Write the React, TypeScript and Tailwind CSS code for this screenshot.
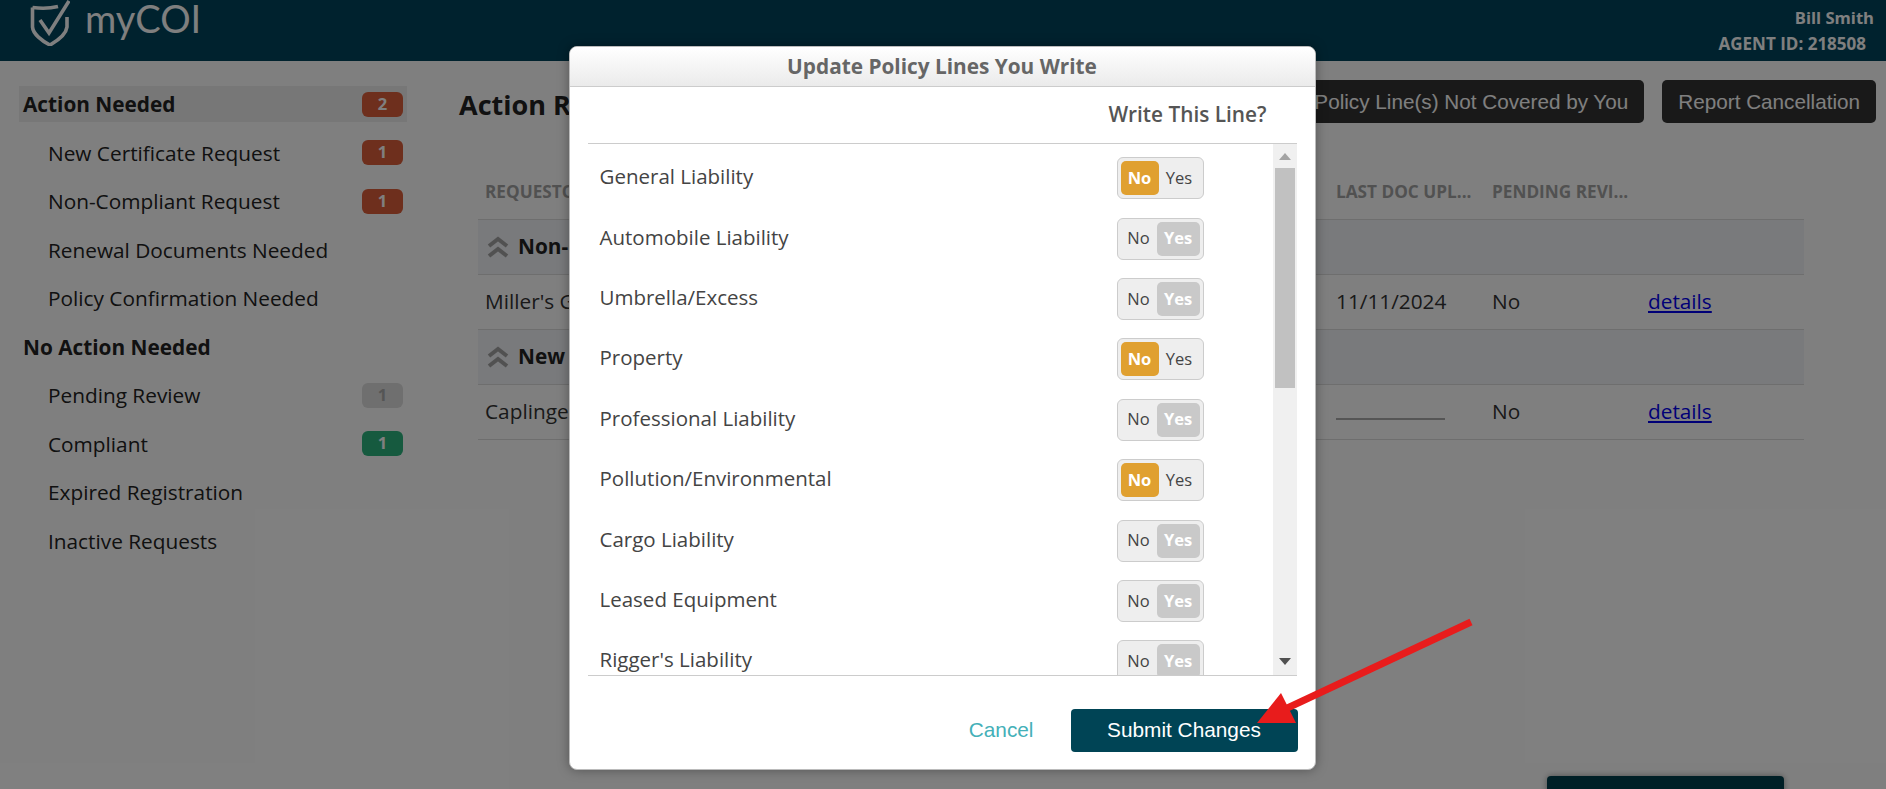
import { useState } from "react";

const sections = [
    {
        title: "Action Needed",
        active: true,
        count: 2,
        items: [
            { label: "New Certificate Request", count: 1, color: "red" },
            { label: "Non-Compliant Request", count: 1, color: "red" },
            { label: "Renewal Documents Needed" },
            { label: "Policy Confirmation Needed" },
        ],
    },
    {
        title: "No Action Needed",
        items: [
            { label: "Pending Review", count: 1, color: "gray" },
            { label: "Compliant", count: 1, color: "green" },
            { label: "Expired Registration" },
            { label: "Inactive Requests" },
        ],
    },
];

const initialLines = [
    { name: "General Liability", writes: false },
    { name: "Automobile Liability", writes: true },
    { name: "Umbrella/Excess", writes: true },
    { name: "Property", writes: false },
    { name: "Professional Liability", writes: true },
    { name: "Pollution/Environmental", writes: false },
    { name: "Cargo Liability", writes: true },
    { name: "Leased Equipment", writes: true },
    { name: "Rigger's Liability", writes: true },
];

const Badge = ({ count, color }: { count: number; color: string }) => {
    const colors: Record<string, string> = {
        red: "bg-[#dc5f3a] text-white",
        green: "bg-[#2cb47e] text-white",
        gray: "bg-[#dedede] text-[#aaaaaa]",
    };
    return (
        <span className={`flex h-[25px] w-[41px] items-center justify-center rounded-[6px] text-[16.5px] font-bold ${colors[color]}`}>
            {count}
        </span>
    );
};

const Logo = () => (
    <div className="flex items-center gap-[15px] pl-[30px]">
        <svg width="40" height="46" viewBox="0 0 40 46" fill="none" stroke="#ffffff" strokeWidth="3.6" className="-mt-[16px]">
            <path d="M2.5 7.5 C10 8.5 20 8.5 28 6.5" />
            <path d="M2.5 7.5 V27 C3 34 12 41 20 45 C27 41 36 35 37 27 V17" />
            <path d="M10 20 L19 33 L39 1" />
        </svg>
        <span className="-mt-[26px] font-['Lato',sans-serif] text-[38px] leading-none text-white">myCOI</span>
    </div>
);

const Chevrons = () => (
    <svg width="22" height="22" viewBox="0 0 22 22" fill="none" stroke="#a3a3a3" strokeWidth="4">
        <path d="M2 10 L11 3 L20 10" />
        <path d="M2 20 L11 13 L20 20" />
    </svg>
);

const Toggle = ({ on, onClick }: { on: boolean; onClick: () => void }) => (
    <button
        onClick={onClick}
        className="flex h-[42px] w-[87px] items-center justify-between rounded-[6px] border border-[#cccccc] bg-[#eeeeee] px-[3px] text-[16.5px] text-[#444444]"
    >
        {on ? (
            <>
                <span className="w-[36px] text-center">No</span>
                <span className="flex h-[34px] w-[43px] items-center justify-center rounded-[5px] bg-[#c9c9c9] font-bold text-white">Yes</span>
            </>
        ) : (
            <>
                <span className="flex h-[34px] w-[39px] items-center justify-center rounded-[5px] bg-[#e0a030] font-bold text-white">No</span>
                <span className="w-[42px] text-center">Yes</span>
            </>
        )}
    </button>
);

const App = () => {
    const [lines, setLines] = useState(initialLines);

    const toggleLine = (name: string) => {
        setLines(prev => prev.map(l => (l.name === name ? { ...l, writes: !l.writes } : l)));
    };

    return (
        <div className="relative h-screen overflow-hidden bg-white font-['Open_Sans',sans-serif] text-[20.8px] text-[#222222]">
            <header className="flex h-[61px] items-center justify-between bg-[#00445c]">
                <Logo />
                <div className="flex flex-col items-end pr-[12px] text-[16.6px] leading-[26px] font-bold text-white">
                    <span>Bill Smith</span>
                    <span className="pr-[8px] text-[17px]">AGENT ID: 218508</span>
                </div>
            </header>

            <div className="flex">
                <aside className="flex w-[459px] shrink-0 flex-col gap-[12.5px] pt-[25px] pl-[19px]">
                    {sections.map(section => (
                        <div key={section.title} className="flex flex-col gap-[12.5px]">
                            <div className={`flex h-[36px] w-[388px] items-center justify-between pr-[4px] pl-[4px] font-bold ${section.active ? "bg-[#eeeeee]" : ""}`}>
                                <span className="pt-[2px]">{section.title}</span>
                                {section.count && <Badge count={section.count} color="red" />}
                            </div>
                            {section.items.map(item => (
                                <div key={item.label} className="flex h-[36px] w-[388px] items-center justify-between pr-[4px] pl-[29px]">
                                    <span className="pt-[2px]">{item.label}</span>
                                    {item.count && <Badge count={item.count} color={item.color as string} />}
                                </div>
                            ))}
                        </div>
                    ))}
                </aside>

                <main className="flex-1 pt-[19px] pr-[10px]">
                    <div className="flex h-[43px] items-center justify-between">
                        <h1 className="pt-[7px] text-[27px] font-bold">Action Required</h1>
                        <div className="flex gap-[18px] font-['Liberation_Sans',sans-serif] text-[20.7px] text-white">
                            <button className="h-[43px] rounded-[5px] bg-[#333333] px-[16px]">Report Policy Line(s) Not Covered by You</button>
                            <button className="h-[43px] rounded-[5px] bg-[#333333] px-[16px]">Report Cancellation</button>
                        </div>
                    </div>

                    <table className="mt-[34px] ml-[19px] w-[1326px] table-fixed border-collapse">
                        <thead>
                            <tr className="h-[62px] border-b border-[#dddddd] text-left text-[17.2px] font-bold text-[#a3a3a3]">
                                <th className="pt-[8px] pl-[7px] font-bold">REQUESTOR</th>
                                <th className="w-[156px] pt-[8px] pl-[7px] font-bold whitespace-nowrap">LAST DOC UPL...</th>
                                <th className="w-[156px] pt-[8px] pl-[7px] font-bold whitespace-nowrap">PENDING REVI...</th>
                                <th className="w-[163px]"></th>
                            </tr>
                        </thead>
                        <tbody>
                            <tr className="h-[55px] border-b border-[#dddddd] bg-[#f2f4f8]">
                                <td colSpan={4} className="pl-[9px] font-bold">
                                    <span className="flex items-center gap-[9px]"><Chevrons />Non-Compliant Request</span>
                                </td>
                            </tr>
                            <tr className="h-[55px] border-b border-[#dddddd] text-[#333333]">
                                <td className="pl-[7px]">Miller's Garage</td>
                                <td className="pl-[7px]">11/11/2024</td>
                                <td className="pl-[7px]">No</td>
                                <td className="pl-[7px]"><a href="#" className="text-[#0000ee] underline">details</a></td>
                            </tr>
                            <tr className="h-[55px] border-b border-[#dddddd] bg-[#f2f4f8]">
                                <td colSpan={4} className="pl-[9px] font-bold">
                                    <span className="flex items-center gap-[9px]"><Chevrons />New Certificate Request</span>
                                </td>
                            </tr>
                            <tr className="h-[55px] border-b border-[#dddddd] text-[#333333]">
                                <td className="pl-[7px]">Caplinger Trucking</td>
                                <td className="pl-[7px]"><div className="mt-[15px] h-[2px] w-[109px] bg-[#aaaaaa]"></div></td>
                                <td className="pl-[7px]">No</td>
                                <td className="pl-[7px]"><a href="#" className="text-[#0000ee] underline">details</a></td>
                            </tr>
                        </tbody>
                    </table>
                </main>
            </div>

            {/* help widget peeking in at the bottom, under the overlay */}
            <div className="absolute top-[776px] left-[1547px] h-[60px] w-[237px] rounded-[4px] bg-[#003f4c] shadow-[0_0_6px_rgba(0,0,0,0.4)]"></div>

            <div className="absolute inset-0 flex justify-center bg-black/50 pt-[46px] pr-[2px]">
                <div className="flex h-[724px] w-[747px] flex-col overflow-hidden rounded-[8px] border border-[#bbbbbb] bg-white shadow-[0_0_12px_rgba(0,0,0,0.35)]">
                    <div className="flex h-[40px] shrink-0 items-center justify-center border-b border-[#cccccc] bg-gradient-to-b from-white to-[#ebebeb] font-bold text-[#666666]">
                        Update Policy Lines You Write
                    </div>
                    <div className="flex h-[56px] shrink-0 items-center justify-end pr-[48px] font-semibold text-[#555555]">
                        Write This Line?
                    </div>
                    <div className="mx-[18px] flex h-[533px] shrink-0 border-y border-[#cccccc]">
                        <div className="flex-1 overflow-hidden pt-[4px]">
                            {lines.map(line => (
                                <div key={line.name} className="flex h-[60.4px] shrink-0 items-center justify-between pr-[69px] pl-[12px] text-[20.5px] text-[#444444]">
                                    <span className="-mt-[3px]">{line.name}</span>
                                    <Toggle on={line.writes} onClick={() => toggleLine(line.name)} />
                                </div>
                            ))}
                        </div>
                        <div className="flex w-[24px] shrink-0 flex-col items-center bg-[#f0f0f0]">
                            <div className="mt-[9px] h-0 w-0 border-x-[6px] border-b-[7px] border-x-transparent border-b-[#a3a3a3]"></div>
                            <div className="mt-[8px] h-[220px] w-[20px] bg-[#c1c1c1]"></div>
                            <div className="mt-[270px] h-0 w-0 border-x-[6px] border-t-[7px] border-x-transparent border-t-[#505050]"></div>
                        </div>
                    </div>
                    <div className="flex flex-1 items-start justify-end gap-[37px] px-[17px] pt-[33px] font-['Liberation_Sans',sans-serif]">
                        <button className="h-[43px] pb-[2px] text-[#44b0b8]">Cancel</button>
                        <button className="h-[43px] w-[227px] rounded-[4px] bg-[#004455] pb-[2px] text-white">Submit Changes</button>
                    </div>
                </div>
            </div>

            {/* red annotation arrow drawn on top of the screenshot */}
            <svg className="absolute top-0 left-0 h-[789px] w-[1886px]" viewBox="0 0 1886 789" fill="none">
                <path d="M1471 622 L1281 711" stroke="#e81c1c" strokeWidth="7" />
                <path d="M1281 693 L1257 723 L1296 723 Z" fill="#e81c1c" />
            </svg>
        </div>
    );
};

export default App;
